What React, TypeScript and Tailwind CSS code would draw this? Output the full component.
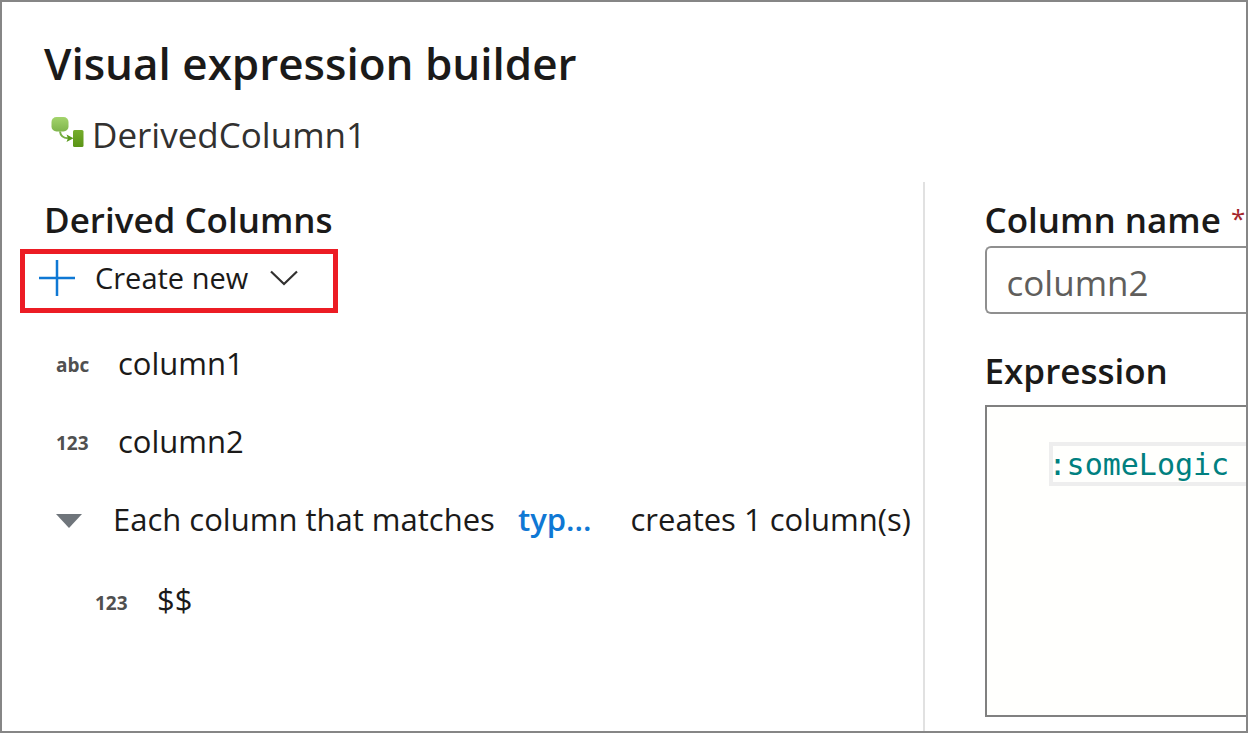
import React from "react";

function DerivedColumnIcon() {
  return (
    <svg viewBox="0 0 34 32" className="h-8 w-[34px] shrink-0 overflow-visible" aria-hidden="true">
      <defs>
        <linearGradient id="source" x1="0" y1="0" x2="0" y2="1">
          <stop offset="0" stopColor="#a3d46c" />
          <stop offset="1" stopColor="#7fb54c" />
        </linearGradient>
        <linearGradient id="target" x1="0" y1="0" x2="0" y2="1">
          <stop offset="0" stopColor="#76ad2c" />
          <stop offset="1" stopColor="#5a9416" />
        </linearGradient>
      </defs>
      <rect x="1.500" y="-2" width="17" height="14.500" rx="5" fill="url(#source)" />
      <path d="M10 12.500c.5 4.500 3.500 6.500 8 6.800" fill="none" stroke="#76b043" strokeWidth="2" />
      <path d="M16.500 15.500l7 3.800-7 3.700 1.500-3.700z" fill="#5a9a1c" />
      <rect x="23" y="11" width="10.500" height="17" rx="1.500" fill="url(#target)" />
    </svg>
  );
}

function ColumnRow({ type, name, nested = false }: { type: string; name: string; nested?: boolean }) {
  return (
    <li className={nested ? "flex h-[82px] items-center pl-[93px]" : "flex h-[78px] items-center pl-[54px]"}>
      <span className={nested ? "w-[62px] shrink-0 pt-2 text-[19px] font-bold text-[#505050]" : "w-[62px] shrink-0 pt-1 text-[19px] font-bold text-[#505050]"}>
        {type}
      </span>
      <span className="text-[31px]">{name}</span>
    </li>
  );
}

export default function App() {
  return (
    <div className="flex min-h-screen flex-col overflow-hidden border-2 border-[#868686] bg-white font-['Open_Sans','Noto_Sans',sans-serif] text-[#1b1a19]">
      <header className="pt-[31px] pl-[42px]">
        <h1 className="text-[44px] leading-[60px] font-semibold">Visual expression builder</h1>
        <div className="mt-[18px] flex h-12 items-center gap-2 pl-[6px] text-[#323130]">
          <DerivedColumnIcon />
          <span className="text-[35px]">DerivedColumn1</span>
        </div>
      </header>

      <main className="mt-[23px] flex grow">
        <section className="w-[74%] shrink-0 pt-[14px]">
          <h2 className="pl-[42px] text-[35px] leading-[48px] font-semibold">Derived Columns</h2>
          <button
            type="button"
            className="mt-[5px] ml-[18px] flex h-16 w-[318px] items-center border-[5px] border-[#ec1c24] pb-[6px] pl-[14px] text-left"
          >
            <svg viewBox="0 0 36 36" className="size-9 shrink-0" aria-hidden="true">
              <path d="M18 0v36M0 18h36" stroke="#0f78d4" strokeWidth="2.500" />
            </svg>
            <span className="ml-5 text-[29px]">Create new</span>
            <svg viewBox="0 0 28 16" className="ml-[22px] h-4 w-7 shrink-0" aria-hidden="true">
              <path d="M1 1.500l13 12.500L27 1.500" fill="none" stroke="#323130" strokeWidth="2.200" />
            </svg>
          </button>

          <ul className="mt-[11px]">
            <ColumnRow type="abc" name="column1" />
            <ColumnRow type="123" name="column2" />
            <li>
              <div className="flex h-[78px] items-center pl-[54px] text-[31px] whitespace-nowrap">
                <button type="button" aria-label="Collapse column pattern" className="w-[57px] shrink-0 pt-1">
                  <svg viewBox="0 0 26 14" className="h-[14px] w-[26px]" aria-hidden="true">
                    <path d="M0 0h26L13 14z" fill="#6f757b" />
                  </svg>
                </button>
                <span>Each column that matches</span>
                <a href="#pattern" className="ml-[23px] font-semibold text-[#0f78d4]">typ...</a>
                <span className="ml-[39px]">creates 1 column(s)</span>
              </div>
              <ul>
                <ColumnRow type="123" name="$$" nested />
              </ul>
            </li>
          </ul>
        </section>

        <section className="min-w-0 grow border-l-2 border-[#e1e1e1] pt-[14px] pb-[14px] pl-[60px]">
          <label htmlFor="column-name" className="flex text-[35px] leading-[48px] font-semibold whitespace-nowrap">
            Column name
            <span className="ml-[10px] text-[26px] leading-[44px] font-normal text-[#a4262c]">*</span>
          </label>
          <input
            id="column-name"
            type="text"
            defaultValue="column2"
            className="mt-[2px] block h-[68px] w-full rounded-l-md border-2 border-r-0 border-[#8f8f8f] pt-1 pl-5 text-[35px] text-[#605e5c]"
          />
          <label htmlFor="expression" className="mt-[33px] block text-[35px] leading-[48px] font-semibold">
            Expression
          </label>
          <div className="mt-[10px] h-[312px] border-2 border-r-0 border-[#808080] bg-[#fffffd] pt-[35px] pl-[62px]">
            <textarea
              id="expression"
              rows={1}
              defaultValue=":someLogic"
              className="block h-11 w-full resize-none overflow-hidden border-4 border-r-0 border-[#eeeeee] pt-px -indent-1 font-['DejaVu_Sans_Mono',monospace] text-[30px] leading-9 text-[#008080]"
            />
          </div>
        </section>
      </main>
    </div>
  );
}
